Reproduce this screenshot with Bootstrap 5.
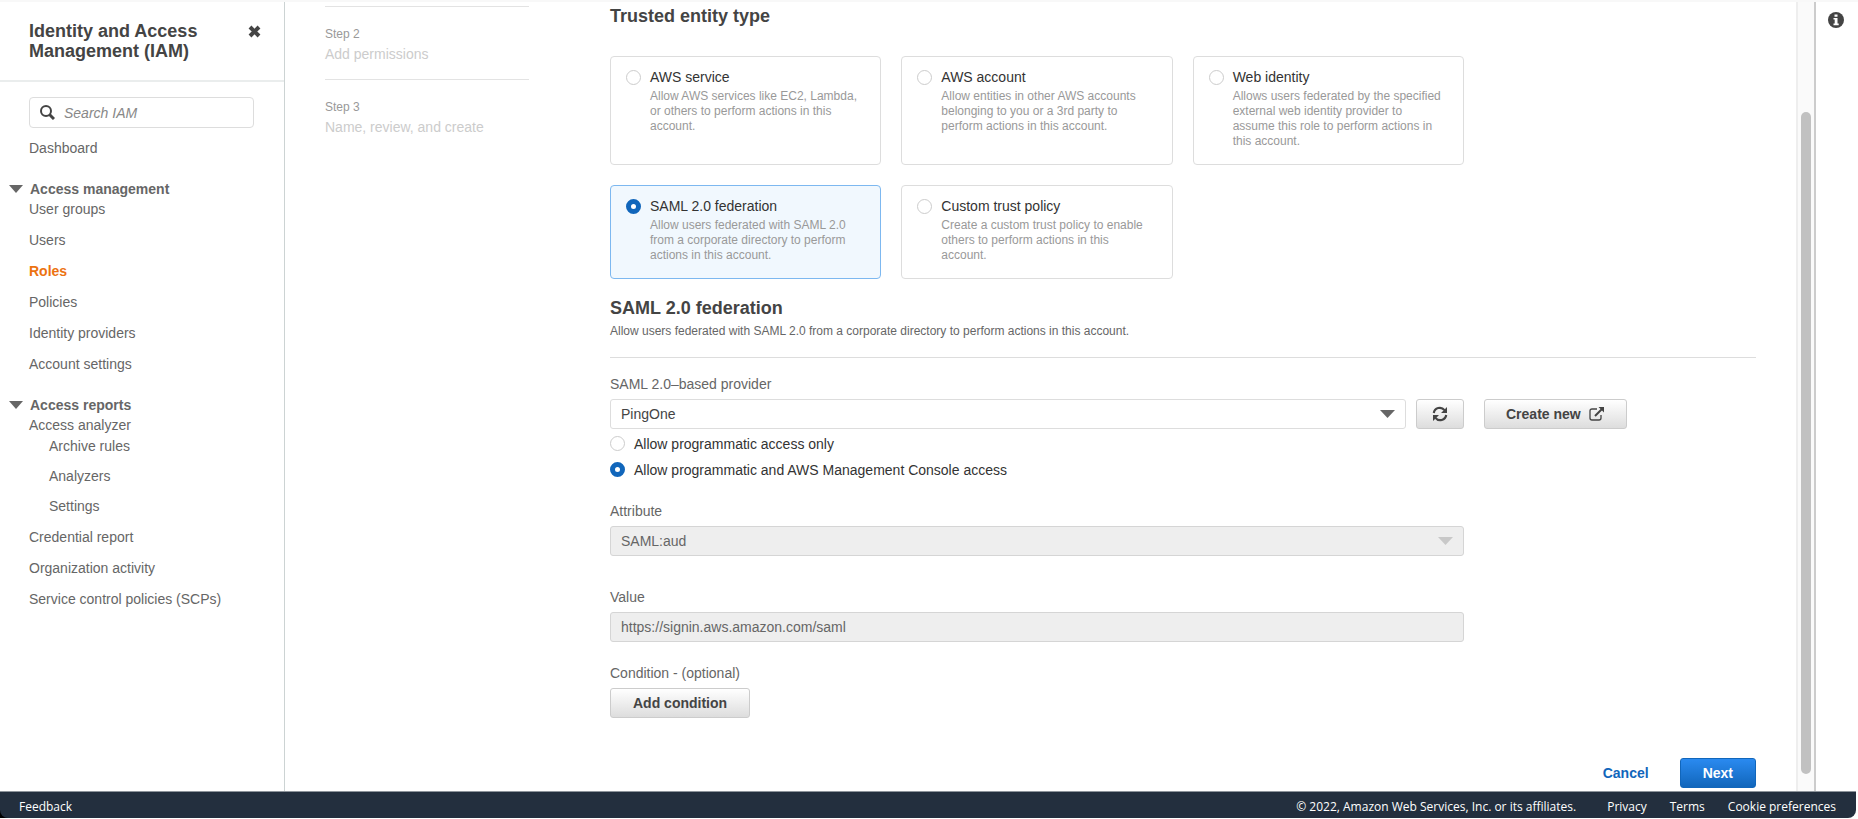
<!DOCTYPE html>
<html lang="en">
<head>
<meta charset="utf-8">
<meta name="viewport" content="width=device-width, initial-scale=1">
<title>Create role - IAM</title>
<link href="https://cdn.jsdelivr.net/npm/bootstrap@5.3.0/dist/css/bootstrap.min.css" rel="stylesheet">
<style>
body{font-family:"Liberation Sans",Arial,sans-serif;font-size:14px;line-height:20px;color:#444;background:#fff}
a{text-decoration:none}
.app{height:100vh;border-top:2px solid #f8f8f8;overflow:hidden;padding-bottom:1px}
.sidebar{width:285px;border-right:1px solid #ccd3d3}
.side-head{padding:19px 22px 19px 29px;border-bottom:2px solid #eaeded}
.side-head h1,.main-form h2{font-size:18px;line-height:20px;font-weight:700;color:#444;margin:0}
.icon-btn{border:0;background:none;padding:0;line-height:0;color:#444}
.icon-btn svg{display:block}
.side-body{padding:15px 30px 0 29px}
.search-box{height:31px;border:1px solid #ddd;border-radius:4px;padding:0 10px;gap:9px;margin-bottom:10px}
.search-box input{border:0;outline:0;padding:0;min-width:0;flex:1;background:none;font-style:italic;color:#444}
.search-box input::placeholder{color:#888;opacity:1}
.side-list{display:flex;flex-direction:column;gap:10px;list-style:none;margin:0;padding:0;line-height:21px}
.side-list a{display:block;color:#666}
.side-list a.current{color:#ec7211;font-weight:700}
.side-list .side-list{padding-left:20px;gap:9px}
.side-group{font-weight:700;color:#666;border:0;background:none;padding:0;gap:7px;margin:20px 0 0 -20px}
.steps{width:204px;margin-left:40px;padding-top:4px}
.step-item{border-top:1px solid #e3e3e3;padding:21px 0 15px;font-size:14px;color:#ccc;line-height:20px}
.step-item span{display:block;font-size:12px;line-height:13px;color:#999;margin-bottom:3px}
.main-form{margin-left:81px;padding-right:40px;padding-top:4px}
.narrow{width:854px;max-width:100%}
.choices{display:grid;grid-template-columns:repeat(3,1fr);gap:20px;margin-top:30px}
.choice{border:1px solid #ddd;border-radius:4px;padding:10px 17px 15px 15px;gap:9px}
.choice.selected{border-color:#7db8f0;background:#f1f8fe}
.choice strong{display:block;font-weight:400;color:#333}
.choice small{display:block;font-size:12px;line-height:15px;color:#999;margin-top:2px}
.radio{appearance:none;flex:none;width:15px;height:15px;margin:3px 0 0;border:1px solid #ccc;border-radius:50%;background:#fff}
.radio:checked{border:5px solid #1166bb}
.section-title{padding-top:19px}
.intro{font-size:12px;line-height:15px;color:#666;margin-top:6px}
.rule{border-top:1px solid #ddd;margin:18px 0 16px}
.field-label{display:block;color:#666;margin-bottom:5px}
.field{display:block;width:100%;height:30px;border:1px solid #ddd;border-radius:3px;padding:0 10px;color:#444;font-size:14px;line-height:20px;appearance:none;background:#fff}
.drop{background:#fff url("data:image/svg+xml,%3Csvg xmlns='http://www.w3.org/2000/svg' width='15' height='8'%3E%3Cpath d='M0 0h15L7.5 8z' fill='%23666'/%3E%3C/svg%3E") no-repeat right 10px center}
.field:disabled{background-color:#eee;color:#666;border-color:#d5d5d5;opacity:1}
.drop:disabled{background-image:url("data:image/svg+xml,%3Csvg xmlns='http://www.w3.org/2000/svg' width='15' height='8'%3E%3Cpath d='M0 0h15L7.5 8z' fill='%23c8c8c8'/%3E%3C/svg%3E")}
.access{gap:9px;margin-top:5px;color:#333}
.access .radio{margin-top:2px}
.access-end{margin:6px 0 21px}
.part{margin-bottom:21px}
.part-wide{margin-bottom:31px}
.provider-row{gap:20px}
.provider-pick{gap:10px}
.actions{margin-top:40px;gap:8px}
.btn{--bs-btn-font-size:14px;--bs-btn-line-height:20px;--bs-btn-font-weight:700;--bs-btn-padding-y:4px;--bs-btn-padding-x:22px;--bs-btn-border-radius:3px}
.btn-plain{color:#444;border-color:#ccc;background:linear-gradient(#fff,#ddd)}
.btn-go{color:#fff;border-color:#1166bb;background:linear-gradient(#2a8af0,#1166bb)}
.btn-flat{color:#1166bb;border-color:transparent}
.btn-square{--bs-btn-padding-x:15px}
.btn-create{--bs-btn-padding-x:21px}
.scroll-track{width:20px;background:#fafafa;border-left:2px solid #eee;border-right:2px solid #ccc;padding:110px 3px 17px}
.scroll-thumb{background:#c1c1c1;border-radius:6px;height:100%}
.info-rail{width:42px;padding:10px 0 0 12px}
.foot-wrap{background:linear-gradient(90deg,#000 50%,#fff 50%);padding-right:2px}
.foot{background:#232f3e;border-top:1px solid #8d949b;border-radius:0 0 8px 8px;height:27px;padding:3px 20px 0 19px;font-family:"Open Sans","Noto Sans",sans-serif;font-size:12px;font-weight:500;gap:23px;color:#fff}
.foot a{color:#fff}
</style>
</head>
<body>
<div class="app d-flex flex-column">
  <div class="d-flex flex-grow-1 overflow-hidden">
    <nav class="sidebar flex-shrink-0" aria-label="IAM">
      <div class="side-head d-flex justify-content-between align-items-start">
        <h1>Identity and Access<br>Management (IAM)</h1>
        <button class="icon-btn mt-1" type="button" aria-label="Close"><svg width="15" height="13" viewBox="0 0 15 13"><path d="M3 2l9 9M12 2l-9 9" stroke="currentColor" stroke-width="4"/></svg></button>
      </div>
      <div class="side-body">
        <label class="search-box d-flex align-items-center">
          <svg width="15" height="15" viewBox="0 0 15 15" fill="none" stroke="#444" stroke-width="2"><circle cx="6" cy="6" r="5"/><path d="M9.5 9.5l4.5 4.5" stroke-width="3"/></svg>
          <input type="search" placeholder="Search IAM" aria-label="Search IAM">
        </label>
        <ul class="side-list"><li><a href="#">Dashboard</a></li></ul>
        <button class="side-group d-flex align-items-center" type="button"><svg width="14" height="8"><path d="M0 0h14L7 8z" fill="#666"/></svg>Access management</button>
        <ul class="side-list">
          <li><a href="#">User groups</a></li>
          <li><a href="#">Users</a></li>
          <li><a href="#" class="current">Roles</a></li>
          <li><a href="#">Policies</a></li>
          <li><a href="#">Identity providers</a></li>
          <li><a href="#">Account settings</a></li>
        </ul>
        <button class="side-group d-flex align-items-center" type="button"><svg width="14" height="8"><path d="M0 0h14L7 8z" fill="#666"/></svg>Access reports</button>
        <ul class="side-list">
          <li><a href="#">Access analyzer</a>
            <ul class="side-list">
              <li><a href="#">Archive rules</a></li>
              <li><a href="#">Analyzers</a></li>
              <li><a href="#">Settings</a></li>
            </ul>
          </li>
          <li><a href="#">Credential report</a></li>
          <li><a href="#">Organization activity</a></li>
          <li><a href="#">Service control policies (SCPs)</a></li>
        </ul>
      </div>
    </nav>
    <aside class="steps flex-shrink-0">
      <div class="step-item"><span>Step 2</span>Add permissions</div>
      <div class="step-item"><span>Step 3</span>Name, review, and create</div>
    </aside>
    <form class="main-form flex-grow-1">
      <h2>Trusted entity type</h2>
      <div class="choices narrow">
        <label class="choice d-flex align-items-start"><input class="radio" type="radio" name="entity"><span><strong>AWS service</strong><small>Allow AWS services like EC2, Lambda, or others to perform actions in this account.</small></span></label>
        <label class="choice d-flex align-items-start"><input class="radio" type="radio" name="entity"><span><strong>AWS account</strong><small>Allow entities in other AWS accounts belonging to you or a 3rd party to perform actions in this account.</small></span></label>
        <label class="choice d-flex align-items-start"><input class="radio" type="radio" name="entity"><span><strong>Web identity</strong><small>Allows users federated by the specified external web identity provider to assume this role to perform actions in this account.</small></span></label>
        <label class="choice selected d-flex align-items-start"><input class="radio" type="radio" name="entity" checked><span><strong>SAML 2.0 federation</strong><small>Allow users federated with SAML 2.0 from a corporate directory to perform actions in this account.</small></span></label>
        <label class="choice d-flex align-items-start"><input class="radio" type="radio" name="entity"><span><strong>Custom trust policy</strong><small>Create a custom trust policy to enable others to perform actions in this account.</small></span></label>
      </div>
      <h2 class="section-title">SAML 2.0 federation</h2>
      <div class="intro">Allow users federated with SAML 2.0 from a corporate directory to perform actions in this account.</div>
      <div class="rule"></div>
      <label class="field-label" for="provider">SAML 2.0–based provider</label>
      <div class="provider-row d-flex">
        <div class="provider-pick narrow d-flex">
          <select class="field drop" id="provider"><option>PingOne</option></select>
          <button class="btn btn-plain btn-square d-flex align-items-center" type="button" aria-label="Refresh"><svg width="16" height="16" viewBox="0 0 16 16" fill="none" stroke="currentColor" stroke-width="2.2"><path d="M1.8 7A6 6 0 0 1 12.5 4.2M14.2 9A6 6 0 0 1 3.5 11.8"/><path d="M15 1v6H9zM1 15V9h6z" fill="currentColor" stroke="none"/></svg></button>
        </div>
        <button class="btn btn-plain btn-create d-flex align-items-center flex-shrink-0 gap-2" type="button">Create new <svg width="16" height="14" viewBox="0 0 16 14" fill="none" stroke="currentColor" stroke-width="1.3"><path d="M8 2H3Q1 2 1 4v7q0 2 2 2h7q2 0 2-2V8"/><path d="M6 9l7-7" stroke-width="2"/><path d="M9.5 0H15v5.500z" fill="currentColor" stroke="none"/></svg></button>
      </div>
      <label class="d-flex access"><input class="radio" type="radio" name="access">Allow programmatic access only</label>
      <label class="d-flex access access-end"><input class="radio" type="radio" name="access" checked>Allow programmatic and AWS Management Console access</label>
      <div class="narrow part-wide">
        <label class="field-label" for="attr">Attribute</label>
        <select class="field drop" id="attr" disabled><option>SAML:aud</option></select>
      </div>
      <div class="narrow part">
        <label class="field-label" for="val">Value</label>
        <input class="field" id="val" type="text" value="https://signin.aws.amazon.com/saml" disabled>
      </div>
      <div class="field-label">Condition - (optional)</div>
      <button class="btn btn-plain d-block" type="button">Add condition</button>
      <div class="actions d-flex justify-content-end">
        <button class="btn btn-flat" type="button">Cancel</button>
        <button class="btn btn-go" type="submit">Next</button>
      </div>
    </form>
    <div class="scroll-track flex-shrink-0"><div class="scroll-thumb"></div></div>
    <aside class="info-rail flex-shrink-0">
      <button class="icon-btn" type="button" aria-label="Info"><svg width="16" height="16" viewBox="0 0 16 16"><circle cx="8" cy="8" r="8" fill="#444"/><path d="M6.500 2.500h3v2.200h-3zM5.500 6h4v5.500h1.200v1.700H5.500v-1.700h1.200V7.600H5.500z" fill="#fff"/></svg></button>
    </aside>
  </div>
  <div class="foot-wrap"><footer class="foot d-flex align-items-center"><a href="#" class="me-auto">Feedback</a><span class="me-2">© 2022, Amazon Web Services, Inc. or its affiliates.</span><a href="#">Privacy</a><a href="#">Terms</a><a href="#">Cookie preferences</a></footer></div>
</div>
<script src="https://cdn.jsdelivr.net/npm/bootstrap@5.3.0/dist/js/bootstrap.bundle.min.js"></script>
</body>
</html>
